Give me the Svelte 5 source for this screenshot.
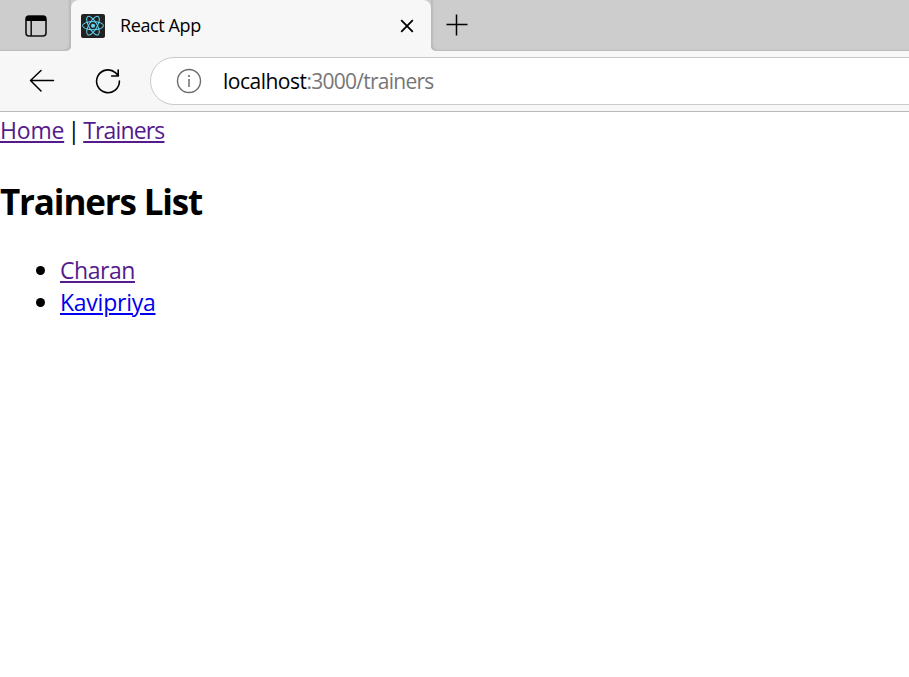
<script>
  const trainers = [
    { name: 'Charan', visited: true, spacing: -0.45 },
    { name: 'Kavipriya', visited: false, spacing: -0.25 }
  ];
</script>

<div class="browser">
  <div class="tabs">
    <div class="workspace">
      <svg width="22" height="22" viewBox="0 0 22 22">
        <rect x="1" y="1" width="20" height="20" rx="3" fill="none" stroke="#111" stroke-width="1.6" />
        <path d="M1 6V4q0-3 3-3h14q3 0 3 3v2Z" fill="#000" />
        <path d="M6.2 6v15" stroke="#111" stroke-width="1.5" />
      </svg>
    </div>
    <div class="tab">
      <svg class="logo" width="24" height="24" viewBox="0 0 24 24">
        <rect width="24" height="24" rx="2" fill="#222" />
        <g fill="none" stroke="#61dafb" stroke-width="1">
          <ellipse cx="12" cy="11.7" rx="10.5" ry="4.1" />
          <ellipse cx="12" cy="11.7" rx="10.5" ry="4.1" transform="rotate(60 12 11.7)" />
          <ellipse cx="12" cy="11.7" rx="10.5" ry="4.1" transform="rotate(120 12 11.7)" />
        </g>
        <circle cx="12" cy="11.7" r="2" fill="#61dafb" />
      </svg>
      <span class="title">React App</span>
      <svg class="close" width="14" height="14" viewBox="0 0 14 14">
        <path d="m1.2 1.2 11.6 11.6m0-11.6L1.2 12.8" stroke="#000" stroke-width="1.8" />
      </svg>
    </div>
    <div class="rest">
      <svg width="22" height="22" viewBox="0 0 22 22">
        <path d="M10.5 .5v21M.5 10.5h21" stroke="#000" stroke-width="1.5" />
      </svg>
    </div>
  </div>

  <div class="toolbar">
    <svg class="back" width="26" height="24" viewBox="0 0 26 24">
      <path d="M24.5 11.5h-23M12 1.5 1.5 11.5 12 22" fill="none" stroke="#000" stroke-width="1.5" stroke-linecap="round" stroke-linejoin="round" />
    </svg>
    <svg class="reload" width="26" height="26" viewBox="0 0 26 26">
      <path d="M24.4 13a11.4 11.4 0 1 1-4-8.4l3 3M23.2 2v6h-6.5" fill="none" stroke="#000" stroke-width="1.6" stroke-linecap="round" stroke-linejoin="round" />
    </svg>
    <div class="address">
      <svg width="26" height="26" viewBox="0 0 26 26">
        <circle cx="13" cy="13" r="11.5" fill="none" stroke="#6b6b6b" stroke-width="1.4" />
        <path d="M13 11v8" stroke="#6b6b6b" stroke-width="1.5" />
        <circle cx="13" cy="8" r="1.1" fill="#6b6b6b" />
      </svg>
      <span class="host">localhost</span><span class="path">:3000/trainers</span>
    </div>
  </div>

  <main>
    <nav>
      <a href="#home" class="visited home">Home</a><span class="bar">|</span><a href="#trainers" class="visited train">Trainers</a>
    </nav>
    <h2>Trainers List</h2>
    <ul>
      {#each trainers as t}
        <li><a href="#trainer" class:visited={t.visited} style="letter-spacing: {t.spacing}px">{t.name}</a></li>
      {/each}
    </ul>
  </main>
</div>

<style>
  .browser {
    height: 677px;
    overflow: hidden;
    background: #fff;
    color: #000;
    font-family: "Open Sans", "Noto Sans", sans-serif;
  }
  svg { display: block; flex: none; }
  .tabs {
    display: flex;
    height: 51px;
    background: #f7f7f7;
  }
  .workspace {
    box-sizing: border-box;
    width: 71px;
    padding: 15px 0 0 25px;
    background: #cdcdcd;
    border-radius: 0 0 5px 0;
    box-shadow: inset -2px -1px 2px #b9b9b9;
  }
  .tab {
    display: flex;
    align-items: center;
    box-sizing: border-box;
    width: 360px;
    padding: 0 17px 0 10px;
    background: #f7f7f7;
    border-radius: 8px 8px 0 0;
    box-shadow: 0 0 0 8px #cdcdcd;
    clip-path: inset(0);
  }
  .title {
    margin: -1px 0 0 15px;
    font-size: 18px;
    line-height: 24px;
    letter-spacing: -0.4px;
    white-space: nowrap;
  }
  .close { margin-left: auto; }
  .rest {
    flex: 1;
    box-sizing: border-box;
    padding: 14px 0 0 15px;
    background: #cdcdcd;
    border-radius: 0 0 0 5px;
    box-shadow: inset 2px -1px 2px #b9b9b9;
  }
  .toolbar {
    display: flex;
    box-sizing: border-box;
    height: 61px;
    padding: 6px 0 0 29px;
    background: #f7f7f7;
    border-bottom: 1px solid #bababa;
  }
  .back { margin-top: 12px; }
  .reload { margin: 11px 0 0 40px; }
  .address {
    display: flex;
    align-items: center;
    box-sizing: border-box;
    width: 800px;
    height: 48px;
    flex: none;
    margin-left: 29px;
    padding-left: 25px;
    background: #fff;
    border: 1px solid #cacaca;
    border-radius: 24px;
    font-size: 21px;
    line-height: 30px;
    white-space: nowrap;
  }
  .host { margin-left: 21px; letter-spacing: -0.5px; }
  .path { color: #767676; letter-spacing: -0.75px; }
  main { font-size: 23px; line-height: 32px; }
  nav { display: flex; height: 33px; padding-top: 2px; }
  a {
    color: #00e;
    text-decoration: underline;
    text-decoration-thickness: 2px;
    text-underline-offset: 2px;
  }
  a.visited { color: #551a8b; }
  .home { letter-spacing: -0.2px; }
  .bar { width: 19px; text-align: center; }
  .train { letter-spacing: -0.85px; }
  h2 {
    margin: 31px 0 0;
    font-size: 35px;
    line-height: 48px;
    font-weight: 700;
    letter-spacing: -1.15px;
  }
  ul { margin: 28px 0 0; padding: 0 0 0 60px; list-style: none; }
  li { position: relative; height: 32px; }
  li::before {
    content: "";
    position: absolute;
    left: -24px;
    top: 12px;
    width: 9px;
    height: 9px;
    border-radius: 50%;
    background: #000;
  }
</style>
